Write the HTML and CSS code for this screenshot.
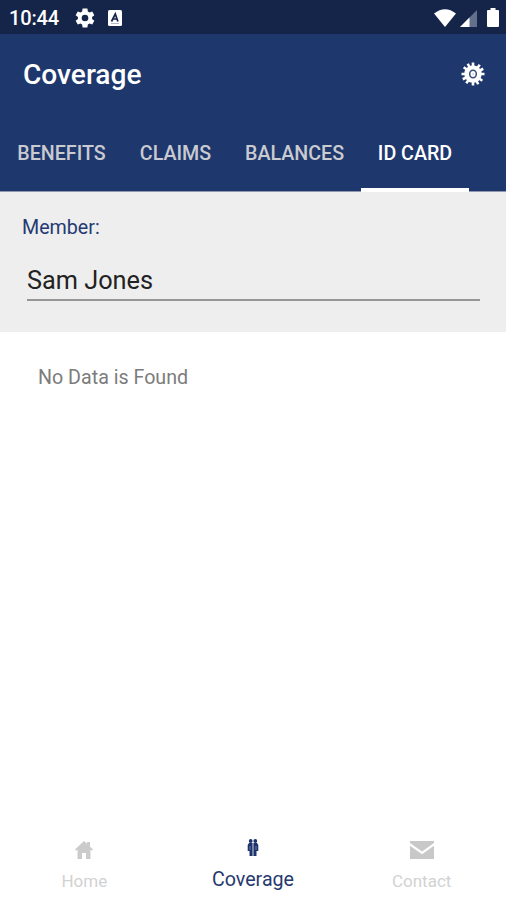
FILE: index.html
```
<!DOCTYPE html>
<html lang="en">
<head>
<meta charset="utf-8">
<title>Coverage</title>
<link rel="stylesheet" href="styles.css">
</head>
<body>
<div class="screen">
  <div class="status">
    <span class="time">10:44</span>
    <svg class="s-gear" width="20" height="20" viewBox="1.500 1.500 21 21"><path fill="#fff" fill-rule="evenodd" d="M19.400 13a7 7 0 0 0 0-2l2.400-1.800-2.200-4-2.800 1.100a7 7 0 0 0-1.800-1L14.500 2h-5L9 5.300a7 7 0 0 0-1.800 1L4.400 5.200l-2.200 4L4.600 11a7 7 0 0 0 0 2l-2.400 1.800 2.200 4 2.800-1.100a7 7 0 0 0 1.800 1l.5 3.300h5l.5-3.300a7 7 0 0 0 1.800-1l2.800 1.100 2.200-4zM12 15.500a3.500 3.500 0 1 1 0-7 3.500 3.500 0 0 1 0 7z"/></svg>
    <svg class="s-a" width="14" height="16" viewBox="0 0 14 16"><rect width="14" height="16" rx="1.500" fill="#fff"/><path d="M3.500 11.500 7.300 4l2.600 7.500M5 9h4.200" fill="none" stroke="#15254a" stroke-width="1.700"/><path d="M3 13.500h8" stroke="#9fa7b8" stroke-width=".8"/></svg>
    <svg class="s-wifi" width="22" height="18" viewBox="0 0 22 18"><path fill="#fff" d="M0 4.600Q11-4.200 22 4.600L11 18z"/></svg>
    <svg class="s-cell" width="17" height="17" viewBox="0 0 17 17"><path d="M0 17 17 0v17z" fill="#63708b"/><path d="M0 17 9.500 7.500V17z" fill="#fff"/></svg>
    <svg class="s-bat" width="12" height="19" viewBox="0 0 12 20" preserveAspectRatio="none"><path fill="#fff" d="M3.500 0h5v2H11q1 0 1 1v16q0 1-1 1H1q-1 0-1-1V3q0-1 1-1h2.500z"/></svg>
  </div>
  <header class="bar">
    <h1>Coverage</h1>
    <svg width="24" height="24" viewBox="-12 -12 24 24"><circle r="8.700" fill="#fff"/><g stroke="#fff" stroke-width="2.600"><path d="M0-11.500V11.500M-11.500 0H11.500"/><path transform="rotate(36)" d="M0-11.500V11.500M-11.500 0H11.500"/><path transform="rotate(63)" d="M0-11.500V11.500M-11.500 0H11.500"/></g><ellipse rx="3.300" ry="3.800" fill="#fff" stroke="#394d7e" stroke-width="1.500"/><circle r="1.300" fill="#dfe2eb"/></svg>
  </header>
  <nav class="tabs">
    <span class="tab t1">BENEFITS</span><span class="tab t2">CLAIMS</span><span class="tab t3">BALANCES</span><span class="tab t4 active">ID CARD</span>
  </nav>
  <section class="member">
    <div class="label">Member:</div>
    <div class="field">Sam Jones</div>
  </section>
  <main><p>No Data is Found</p></main>
  <footer class="bottom">
    <div class="item">
      <svg width="18" height="18" viewBox="0 0 18 18"><path fill="#cbcbcb" d="M0 8.500 9 0l3 2.800V1h3v4.700l3 2.800-1.200 1.200L15.500 8.500V18H11v-6H7v6H2.500V8.500L1.200 9.700z"/></svg>
      <span class="home">Home</span>
    </div>
    <div class="item on">
      <svg width="12" height="18" viewBox="0 0 12 18"><g fill="#1d336b"><circle cx="3.700" cy="2" r="1.900"/><circle cx="8.300" cy="2" r="1.900"/><path d="M2 4h3.600V17H2.500V12H.7V6zM6.400 4H10L11.300 6v6H9.500v5H6.400z"/></g><path d="M3 7v4M9 7v4" stroke="#8291b4" stroke-width=".8"/></svg>
      <span class="cov">Coverage</span>
    </div>
    <div class="item">
      <svg width="24" height="18" viewBox="0 0 24 18"><path fill="#c8c8c8" d="M0 0h24v2L12 10.500 0 2zM0 4.800l12 8.400 12-8.400V18H0z"/></svg>
      <span class="contact">Contact</span>
    </div>
  </footer>
</div>
</body>
</html>
```
FILE: styles.css
```
* { box-sizing: border-box; }
body { margin: 0; font-family: Roboto, sans-serif; background: #fff; }
svg { display: block; flex: none; }
.screen { width: 506px; height: 900px; display: flex; flex-direction: column; overflow: hidden; }
.status { height: 34px; flex: none; background: #15254a; display: flex; align-items: center; padding: 1px 7px 0 9px; color: #fff; }
.time { font-size: 20px; font-weight: 500; width: 66px; padding-top: 1px; letter-spacing: -0.15px; }
.s-a { margin-left: 13px; }
.s-wifi { margin-left: auto; }
.s-cell { margin: 1px 10px 0 4px; }
.bar { height: 82px; flex: none; background: #1e376d; display: flex; align-items: center; justify-content: space-between; padding: 0 21px 3px 23px; }
h1 { margin: 3px 0 0; font-size: 28.1px; line-height: 32px; font-weight: 500; color: #fff; }
.tabs { height: 76px; flex: none; background: #1e376d; display: flex; border-bottom: 1px solid #8f98ae; }
.tab { font-size: 19.67px; line-height: 76px; font-weight: 500; color: #c9cbd1; text-align: center; white-space: nowrap; height: 76px; }
.t1 { width: 123px; }
.t2 { width: 105px; }
.t3 { width: 133px; }
.t4 { width: 108px; }
.active { color: #fff; border-bottom: 4px solid #fff; }
.member { height: 140px; flex: none; background: #eee; padding: 24px 26px 0 22px; color: #243a72; }
.label { font-size: 19.67px; line-height: 24px; }
.field { margin: 21px 0 0 5px; height: 40px; font-size: 25.3px; line-height: 40px; color: #222; border-bottom: 2px solid #969696; }
main { flex: 1; padding: 33px 38px; }
p { margin: 0; font-size: 19.67px; line-height: 25px; color: #7c7c7c; }
.bottom { height: 78px; flex: none; display: grid; grid-template-columns: repeat(3, 1fr); }
.item { display: flex; flex-direction: column; align-items: center; padding-top: 19px; color: #d2d2d2; font-size: 17px; line-height: 22px; }
.item span { margin-top: 11px; }
.item.on { padding-top: 17px; color: #26396f; font-size: 19.67px; }
.item.on span { margin-top: 12px; }
```
